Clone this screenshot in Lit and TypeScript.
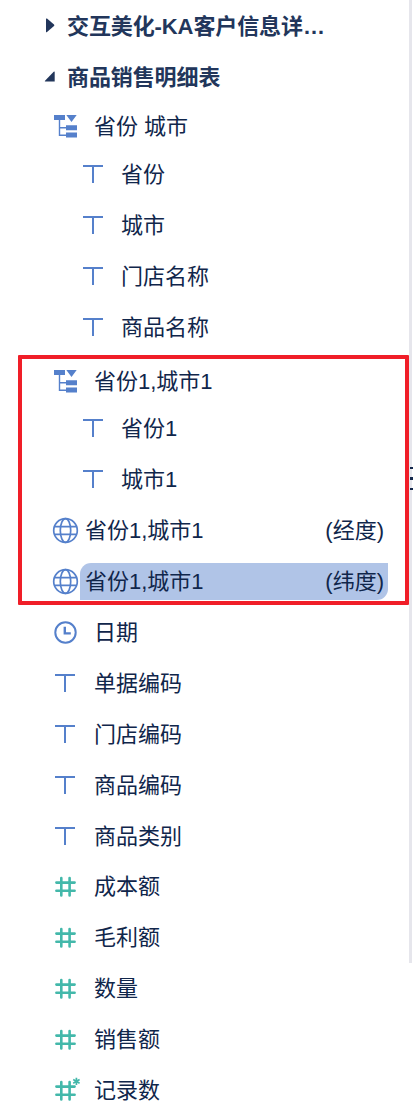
import { LitElement, html, css, svg } from "lit";
import { customElement, property } from "lit/decorators.js";
import { classMap } from "lit/directives/class-map.js";

type IconName = "tree" | "text" | "globe" | "clock" | "number" | "count";

interface Field {
  icon: IconName;
  label: string;
  note?: string;
  child?: boolean;
  selected?: boolean;
}

const icons = {
  tree: svg`<path fill="#5580cb" d="M2 2h11v5H2zM14.3 2h10.4l-5.2 7zM14 12.2h11v5H14zM14 19.6h11v5H14z"/>
    <path fill="none" stroke="#5580cb" stroke-width="1.4" d="M7.5 6v16.2H14M7.5 14.8H14"/>`,
  text: svg`<path fill="#5580cb" d="M3 4h20v2H14v16h-2V6H3z"/>`,
  globe: svg`<g fill="none" stroke="#5580cb" stroke-width="1.7">
    <circle cx="13.5" cy="13.5" r="11.8"/><ellipse cx="13.5" cy="13.5" rx="5.2" ry="11.8"/>
    <path d="M2.4 9.6h22.2M2.4 17.4h22.2"/></g>`,
  clock: svg`<g fill="none" stroke="#5580cb" stroke-width="2"><circle cx="13.5" cy="13.5" r="10.2"/>
    <path stroke-width="2.4" d="M12.8 7.8v6.6h6"/></g>`,
  number: svg`<path fill="none" stroke="#43b8aa" stroke-width="2.6" stroke-linecap="round" d="M9.3 5v17.4M17.6 5v17.4M4.4 9.6h18.2M4.4 17.7h18.2"/>`,
  count: svg`<path fill="none" stroke="#43b8aa" stroke-width="2.6" stroke-linecap="round" d="M9.3 5v17.4M17.6 5v17.4M4.4 9.6h18.2M4.4 17.7h18.2"/>
    <path fill="none" stroke="#43b8aa" stroke-width="1.7" d="M24.4 .8v7.2M21.2 2.6l6.4 3.6M27.6 2.6l-6.4 3.6"/>`,
};

const region: Field[] = [
  { icon: "tree", label: "省份 城市" },
  { icon: "text", label: "省份", child: true },
  { icon: "text", label: "城市", child: true },
  { icon: "text", label: "门店名称", child: true },
  { icon: "text", label: "商品名称", child: true },
];

const geo: Field[] = [
  { icon: "tree", label: "省份1,城市1" },
  { icon: "text", label: "省份1", child: true },
  { icon: "text", label: "城市1", child: true },
  { icon: "globe", label: "省份1,城市1", note: "(经度)" },
  { icon: "globe", label: "省份1,城市1", note: "(纬度)", selected: true },
];

const dimensions: Field[] = [
  { icon: "clock", label: "日期" },
  { icon: "text", label: "单据编码" },
  { icon: "text", label: "门店编码" },
  { icon: "text", label: "商品编码" },
  { icon: "text", label: "商品类别" },
];

const measures: Field[] = [
  { icon: "number", label: "成本额" },
  { icon: "number", label: "毛利额" },
  { icon: "number", label: "数量" },
  { icon: "number", label: "销售额" },
  { icon: "count", label: "记录数" },
];

@customElement("field-row")
class FieldRow extends LitElement {
  @property({ attribute: false }) field!: Field;

  static styles = css`
    :host { display: block; }
    .row { display: flex; align-items: center; height: 51px; padding: 0 29px 0 52px; box-sizing: border-box; }
    .row.child { padding-left: 80px; }
    .row.tree { height: 46px; padding-top: var(--lead, 2px); }
    .icon { flex: none; width: 28px; height: 28px; overflow: visible; }
    .label {
      flex: 1; display: flex; justify-content: space-between; align-items: center;
      height: 37px; padding: 0 4px 0 14px; white-space: pre;
    }
    .child .label { padding-left: 13px; }
    .globe .label { padding-left: 5px; }
    .selected .label { background: #b0c4e7; border-radius: 11px 0 11px 0; }
  `;

  render() {
    const f = this.field;
    return html`<div class=${classMap({ row: true, [f.icon]: true, child: !!f.child, selected: !!f.selected })}>
      <svg class="icon" viewBox="0 0 28 28">${icons[f.icon]}</svg>
      <div class="label"><span>${f.label}</span>${f.note ? html`<span>${f.note}</span>` : ""}</div>
    </div>`;
  }
}

@customElement("app-root")
class AppRoot extends LitElement {
  static styles = css`
    :host {
      display: block; position: relative; height: 1112px; overflow: hidden; background: #fff;
      color: #10264b; font: 22px/32px "Liberation Sans", "Noto Sans CJK SC", sans-serif;
    }
    .titles { padding-top: 1px; }
    .title { display: flex; align-items: center; height: 51px; padding-left: 44px; color: #22365b; font-weight: 700; letter-spacing: -0.1px; }
    .title svg { width: 23px; height: 20px; flex: none; }
    .geo { padding-top: 4px; --lead: 4px; }
    .measures { margin-top: -1px; }
    .scroll { position: absolute; left: 409px; top: 0; width: 3px; height: 963px; background: #e6e6ec; }
    .handle { position: absolute; left: 410px; top: 467px; width: 3px; display: grid; gap: 8px; }
    .handle i { height: 2.4px; background: #14284c; }
    .frame { position: absolute; left: 18px; top: 355px; width: 391px; height: 250px; box-sizing: border-box; border: 4px solid #f01e28; border-radius: 1px; }
  `;

  private rows(fields: Field[]) {
    return fields.map((f) => html`<field-row .field=${f}></field-row>`);
  }

  render() {
    return html`
      <div class="titles">
        <div class="title"><svg viewBox="0 0 23 20"><path fill="#22365b" d="M2 2q0-1 1-.4l7 6q.8.8 0 1.5l-7 6q-1 .6-1-.4z"/></svg>交互美化-KA客户信息详…</div>
        <div class="title"><svg viewBox="0 0 23 20"><path fill="#22365b" d="M10.7 4v9.6H1.2q-.8 0-.2-.8l8.7-9q1-.8 1 .2z"/></svg>商品销售明细表</div>
      </div>
      <div>${this.rows(region)}</div>
      <div class="geo">${this.rows(geo)}</div>
      <div>${this.rows(dimensions)}</div>
      <div class="measures">${this.rows(measures)}</div>
      <div class="scroll"></div>
      <div class="handle"><i></i><i></i><i></i></div>
      <div class="frame"></div>
    `;
  }
}
